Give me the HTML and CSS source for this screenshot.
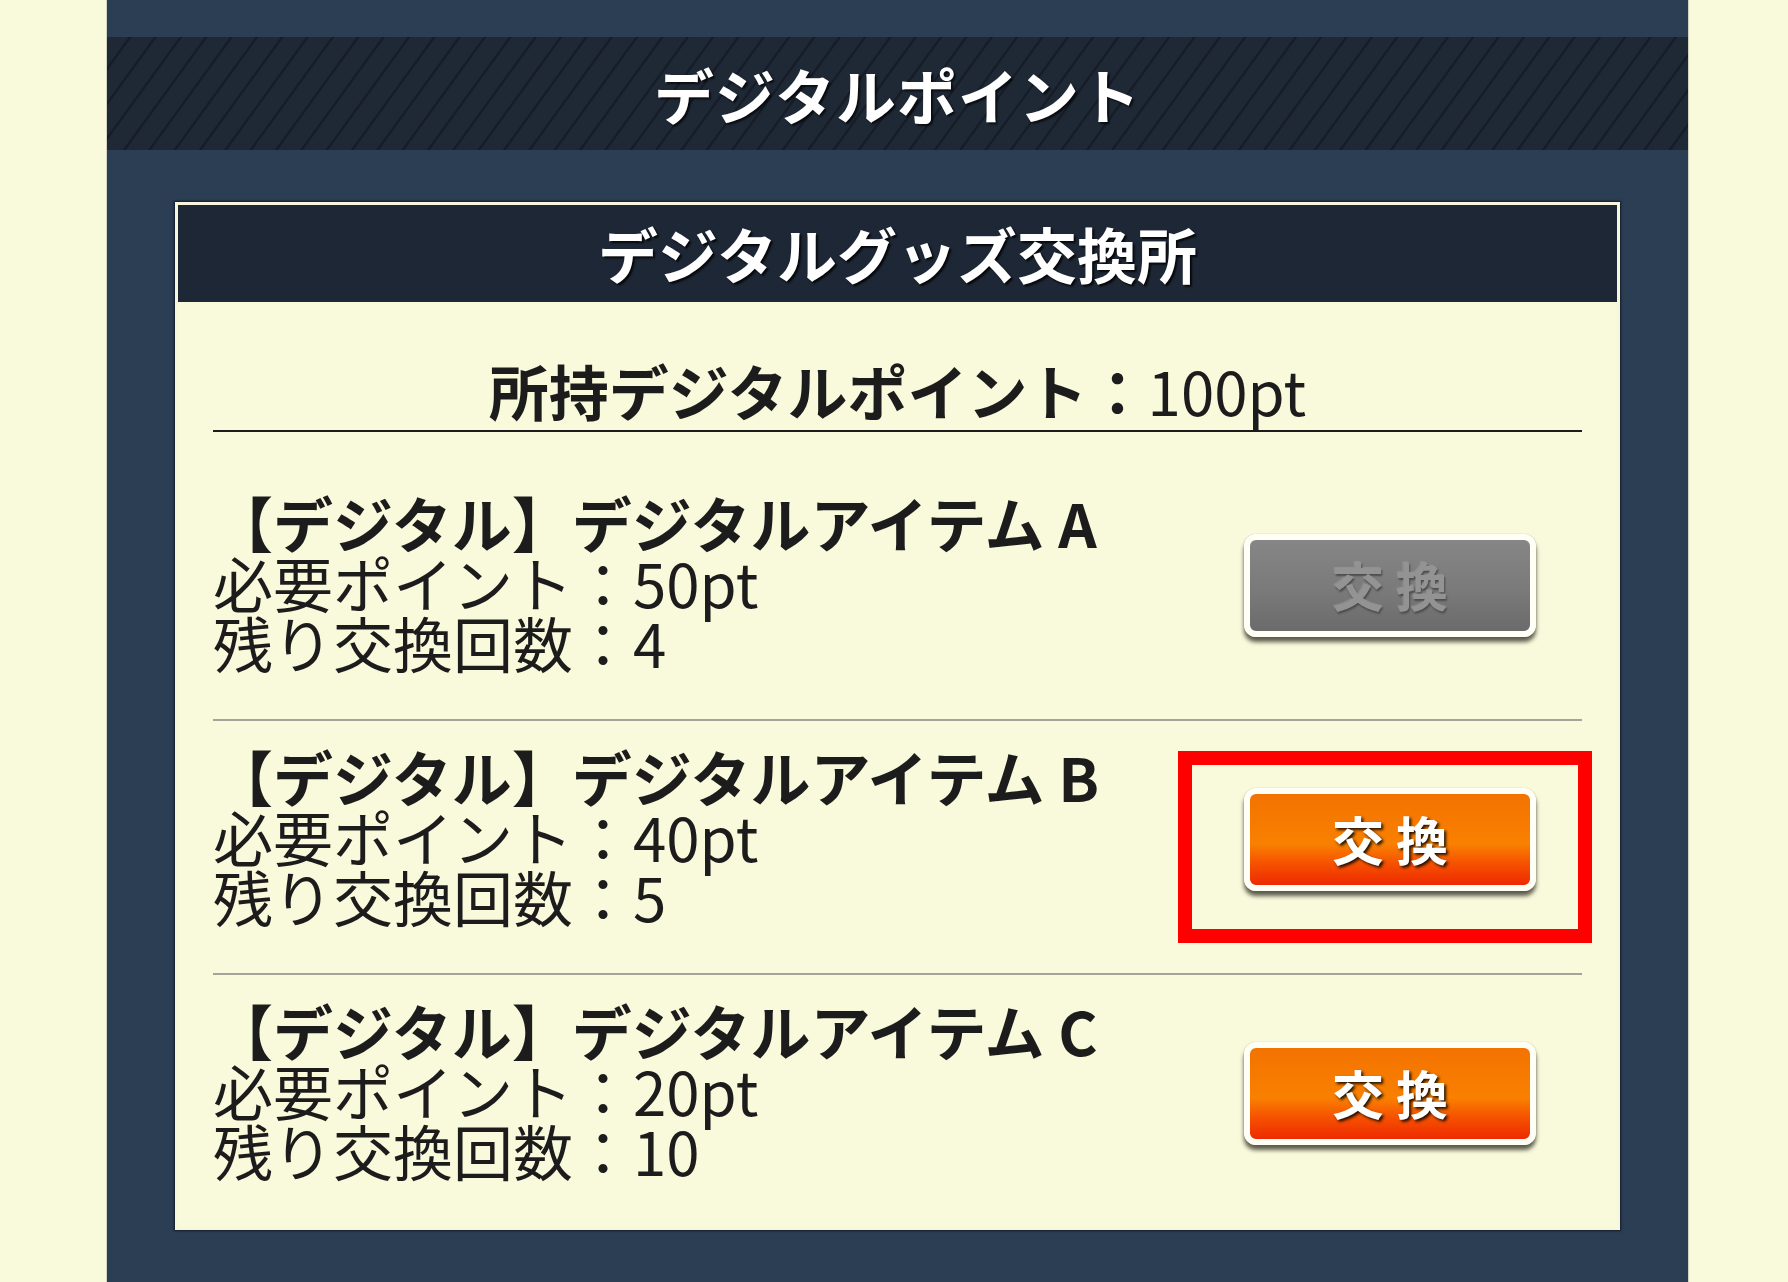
FILE: index.html
```html
<!DOCTYPE html>
<html lang="ja">
<head>
<meta charset="utf-8">
<title>デジタルポイント</title>
<link rel="stylesheet" href="styles.css">
</head>
<body>
<div class="panel">
  <h1 class="panel-title">デジタルポイント</h1>
  <section class="shop">
    <h2 class="shop-title">デジタルグッズ交換所</h2>
    <div class="shop-body">
      <p class="points"><b>所持デジタルポイント：</b>100pt</p>
      <ul class="items">
        <li class="item">
          <div class="info">
            <div class="name">【デジタル】デジタルアイテム A</div>
            <div>必要ポイント：50pt</div>
            <div>残り交換回数：4</div>
          </div>
          <div class="btn-wrap">
            <span class="btn btn-off">交 換</span>
          </div>
        </li>
        <li class="item">
          <div class="info">
            <div class="name">【デジタル】デジタルアイテム B</div>
            <div>必要ポイント：40pt</div>
            <div>残り交換回数：5</div>
          </div>
          <div class="btn-wrap">
            <span class="btn btn-on">交 換</span>
            <span class="highlight"></span>
          </div>
        </li>
        <li class="item">
          <div class="info">
            <div class="name">【デジタル】デジタルアイテム C</div>
            <div>必要ポイント：20pt</div>
            <div>残り交換回数：10</div>
          </div>
          <div class="btn-wrap">
            <span class="btn btn-on">交 換</span>
          </div>
        </li>
      </ul>
    </div>
  </section>
</div>
</body>
</html>
```

FILE: styles.css
```css
html, body {
  margin: 0;
  padding: 0;
}
body {
  background: #f9f9dc;
  height: 1282px;
  overflow: hidden;
  font-family: "Noto Sans CJK JP", "Noto Sans", sans-serif;
  color: #1c1c1c;
}
.panel {
  margin-left: 107px;
  width: 1581px;
  min-height: 1282px;
  box-sizing: border-box;
  background: #2c3e54;
  padding-top: 37px;
  box-shadow: 0 0 1px #1a2433;
}
.panel-title {
  margin: 0;
  height: 113px;
  display: flex;
  align-items: center;
  justify-content: center;
  font-size: 60px;
  font-weight: 700;
  color: #ffffff;
  letter-spacing: 1px;
  text-shadow: 2px 2px 2px rgba(0,0,0,0.7);
  background-color: #1f2936;
  background-image: repeating-linear-gradient(126deg, #1f2936 0px, #1f2936 17px, #161d28 18px, #161d28 19.5px, #1f2936 20.5px);
}
.shop {
  margin: 52px 68px 0;
  border: 3px solid #f7f7dd;
  box-shadow: 0 0 2px 1px #141b26;
  background: #f9f9dc;
}
.shop-title {
  margin: 0;
  height: 97px;
  padding-bottom: 2px;
  box-sizing: border-box;
  display: flex;
  align-items: center;
  justify-content: center;
  background: #1e2735;
  color: #ffffff;
  font-size: 60px;
  font-weight: 700;
  text-shadow: 2px 2px 2px rgba(0,0,0,0.8);
}
.shop-body {
  padding: 58px 35px 0;
}
.points {
  margin: 0;
  text-align: center;
  font-size: 60px;
  line-height: 60px;
  padding-bottom: 10px;
  border-bottom: 2px solid #1c1c1c;
}
.points b {
  font-weight: 700;
}
.items {
  list-style: none;
  margin: 35px 0 0;
  padding: 0;
}
.item {
  display: flex;
  align-items: center;
  justify-content: space-between;
  padding: 25px 0 47px;
  border-bottom: 2px solid #a4a49a;
}
.item:last-child {
  border-bottom: none;
}
.info {
  font-size: 60px;
  line-height: 60px;
  white-space: nowrap;
}
.name {
  font-weight: 700;
}
.btn-wrap {
  position: relative;
  margin-right: 46px;
  margin-top: 6px;
}
.btn {
  display: flex;
  align-items: center;
  justify-content: center;
  width: 292px;
  height: 103px;
  box-sizing: border-box;
  border: 6px solid #fffff6;
  border-radius: 12px;
  font-size: 52px;
  font-weight: 700;
  line-height: 1;
  box-shadow: 0 5px 4px rgba(40,40,30,0.75), 0 0 1px rgba(0,0,0,0.4);
}
.btn-on {
  color: #ffffff;
  background: linear-gradient(to bottom, #f37300 0%, #f98000 55%, #f65200 76%, #ee2a00 100%);
  text-shadow: 2px 2px 3px rgba(0,0,0,0.85);
}
.btn-off {
  color: #939393;
  background: linear-gradient(to bottom, #868686 0%, #7a7a7a 55%, #6b6b6b 100%);
  text-shadow: 1px 2px 2px #4c4c4c, -1px -1px 1px rgba(255,255,255,0.15);
}
.highlight {
  position: absolute;
  left: -66px;
  top: -37px;
  width: 414px;
  height: 192px;
  box-sizing: border-box;
  border: 14px solid #ff0000;
}
```
